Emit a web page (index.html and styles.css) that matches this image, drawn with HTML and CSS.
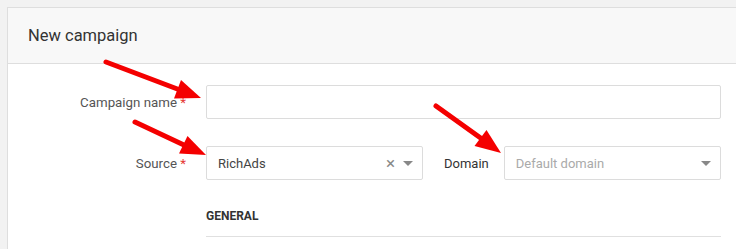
FILE: index.html
```
<html>

<head>
    <title>New campaign</title>
    <link rel="stylesheet" href="styles.css">
</head>

<body class="body">
    <div class="panel">
        <div class="panelHeader">New campaign</div>
        <div class="panelBody">
            <div class="formRow">
                <label class="fieldLabel">Campaign name <span class="req">*</span></label>
                <input type="text" class="textInput">
            </div>
            <div class="formRow">
                <label class="fieldLabel">Source <span class="req">*</span></label>
                <div class="select">
                    <span class="selectValue">RichAds</span>
                    <span class="selectClear">&times;</span>
                    <span class="caret"></span>
                </div>
                <label class="inlineLabel">Domain</label>
                <div class="select">
                    <span class="selectValue placeholder">Default domain</span>
                    <span class="caret"></span>
                </div>
            </div>
            <div class="section">
                <div class="sectionTitle">GENERAL</div>
            </div>
        </div>
    </div>

    <!-- annotation arrows -->
    <svg class="arrows" width="736" height="249" viewBox="0 0 736 249">
        <g fill="#f40000" stroke="#f40000" stroke-width="5" stroke-linecap="round">
            <line x1="106" y1="62" x2="180" y2="90" />
            <polygon stroke="none" points="201,98 174,98.5 181,80" />
            <line x1="135" y1="122" x2="185" y2="145.5" />
            <polygon stroke="none" points="206,155 179,153.5 187.5,136" />
            <line x1="436" y1="106" x2="482" y2="139" />
            <polygon stroke="none" points="501,153 474.5,146 486.5,130" />
        </g>
    </svg>
</body>

</html>
```

FILE: styles.css
```
.body {
    margin: 0;
    padding: 7px 0 0 7px;
    background-color: #f2f2f2;
    font-family: Roboto, "Liberation Sans", sans-serif;
    overflow: hidden;
    position: relative;
    height: 249px;
    box-sizing: border-box;
}

.panel {
    width: 760px;
    height: 241px;
    background-color: #fff;
    border: 1px solid #dedede;
    border-bottom: none;
}

.panelHeader {
    height: 56px;
    box-sizing: border-box;
    padding: 18px 0 0 20px;
    background-color: #f8f8f8;
    border-bottom: 1px solid #dedede;
    font-size: 16.5px;
    color: #333;
}

.panelBody {
    padding-top: 21px;
}

.formRow {
    display: flex;
    align-items: center;
    height: 34px;
    margin-bottom: 27px;
}

.fieldLabel {
    width: 182px;
    padding-right: 4px;
    margin-right: 16px;
    box-sizing: border-box;
    text-align: right;
    font-size: 13.3px;
    color: #555;
}

.req {
    color: #e53935;
}

.textInput {
    width: 515px;
    height: 34px;
    box-sizing: border-box;
    border: 1px solid #dcdcdc;
    border-radius: 2px;
    outline: none;
}

.select {
    width: 217px;
    height: 34px;
    box-sizing: border-box;
    border: 1px solid #dcdcdc;
    border-radius: 2px;
    display: flex;
    align-items: center;
    padding: 0 9px 0 11px;
    font-size: 13px;
    color: #444;
}

.selectValue {
    flex: 1;
}

.placeholder {
    color: #aaa;
}

.selectClear {
    color: #888;
    font-size: 17px;
    margin-right: 8px;
    margin-top: -1px;
}

.caret {
    width: 0;
    height: 0;
    border-left: 5px solid transparent;
    border-right: 5px solid transparent;
    border-top: 5px solid #888;
}

.inlineLabel {
    margin: 0 15px 0 21px;
    font-size: 13px;
    color: #333;
}

.section {
    margin-left: 198px;
    width: 515px;
    padding-top: 2px;
}

.sectionTitle {
    font-size: 12px;
    font-weight: bold;
    color: #333;
    padding-bottom: 13px;
    border-bottom: 1px solid #e0e0e0;
}

.arrows {
    position: absolute;
    left: 0;
    top: 0;
}
```
